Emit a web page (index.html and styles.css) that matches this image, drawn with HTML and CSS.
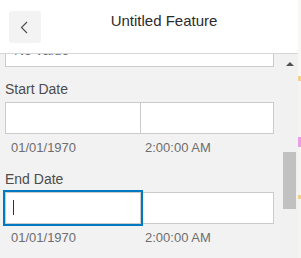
FILE: index.html
```html
<!DOCTYPE html>
<html lang="en">
<head>
  <meta charset="UTF-8" />
  <title>Untitled Feature</title>
  <link rel="stylesheet" href="styles.css">
</head>
<body>
  <div class="app">
    <div class="panel">
      <!-- Header -->
      <div class="header">
        <button class="back-btn" title="Back">
          <svg width="32" height="32" viewBox="0 0 32 32">
            <path d="M18 11 L12.5 16.5 L18 22" fill="none" stroke="#4a4a4a" stroke-width="1.1" />
          </svg>
        </button>
        <div class="title">Untitled Feature</div>
      </div>

      <!-- Scrolled form -->
      <div class="body">
        <div class="fields">
          <div class="cut-field">
            <div class="input full">No value</div>
          </div>

          <div class="field">
            <div class="label">Start Date</div>
            <div class="date-row">
              <div class="input date"></div>
              <div class="input time"></div>
            </div>
            <div class="hint-row">
              <span class="hint">01/01/1970</span>
              <span class="hint hint-time">2:00:00 AM</span>
            </div>
          </div>

          <div class="field">
            <div class="label">End Date</div>
            <div class="date-row">
              <div class="input date focused"><span class="caret"></span></div>
              <div class="input time"></div>
            </div>
            <div class="hint-row">
              <span class="hint">01/01/1970</span>
              <span class="hint hint-time">2:00:00 AM</span>
            </div>
          </div>
        </div>

        <div class="scrollbar">
          <div class="arrow-up"></div>
          <div class="thumb"></div>
        </div>
      </div>
    </div>
    <div class="map-edge"></div>
  </div>
</body>
</html>
```

FILE: styles.css
```css
body {
  margin: 0;
  font-family: 'Liberation Sans', Arial, sans-serif;
  color: #323232;
  background: #f6f6f4;
}
.app {
  display: flex;
  width: 301px;
  height: 258px;
  overflow: hidden;
}
.panel {
  width: 298px;
  display: flex;
  flex-direction: column;
  background: #f2f2f2;
}
.header {
  flex-shrink: 0;
  height: 54px;
  box-sizing: border-box;
  background: #fff;
  border-bottom: 1px solid #d6d6d6;
  display: flex;
  align-items: flex-start;
  padding: 11px 11px 0 9px;
}
.back-btn {
  width: 32px;
  height: 32px;
  padding: 0;
  border: none;
  border-radius: 3px;
  background: #f3f3f3;
  cursor: pointer;
}
.back-btn svg {
  display: block;
}
.title {
  flex: 1;
  text-align: center;
  font-size: 15px;
  line-height: 20px;
  color: #2b2b2b;
}
.body {
  flex: 1;
  display: flex;
  min-height: 0;
}
.fields {
  flex: 1;
  overflow: hidden;
  padding: 0 7px 0 5px;
}
.cut-field .input {
  margin-top: -19px;
}
.input {
  height: 32px;
  box-sizing: border-box;
  background: #fff;
  border: 1px solid #cbcbcb;
}
.input.full {
  font-size: 14px;
  line-height: 29px;
  padding-left: 8px;
  color: #6e6e6e;
}
.field {
  margin-top: 12px;
}
.label {
  font-size: 14px;
  line-height: 20px;
  color: #4c4c4c;
}
.date-row {
  display: flex;
  margin-top: 3px;
}
.input.date {
  width: 136px;
  position: relative;
  padding-left: 7px;
}
.input.time {
  flex: 1;
  border-left: none;
}
.input.focused {
  outline: 2px solid #0079c1;
}
.caret {
  display: block;
  width: 1px;
  height: 15px;
  margin-top: 7px;
  background: #323232;
}
.hint-row {
  display: grid;
  grid-template-columns: 135px 1fr;
  margin-top: 5px;
}
.hint {
  font-size: 13px;
  line-height: 18px;
  color: #6e6e6e;
  padding-left: 6px;
}
.hint-time {
  padding-left: 5px;
}
.scrollbar {
  width: 17px;
  background: #f1f1f1;
  display: flex;
  flex-direction: column;
  align-items: center;
}
.arrow-up {
  width: 0;
  height: 0;
  margin-top: 8px;
  border-left: 4px solid transparent;
  border-right: 4px solid transparent;
  border-bottom: 4px solid #505050;
}
.thumb {
  width: 13px;
  height: 57px;
  margin-top: 86px;
  background: #c1c1c1;
}
.map-edge {
  width: 3px;
  background:
    linear-gradient(#f7f7f5 0, #f7f7f5 76px, #f5cf8a 76px, #f5cf8a 81px, #f4f4f2 81px,
      #f4f4f2 137px, #ea9ee6 137px, #ea9ee6 147px, #f4f4f2 147px,
      #f4f4f2 195px, #f5cf8a 195px, #f5cf8a 199px, #f4f4f2 199px);
}
```
